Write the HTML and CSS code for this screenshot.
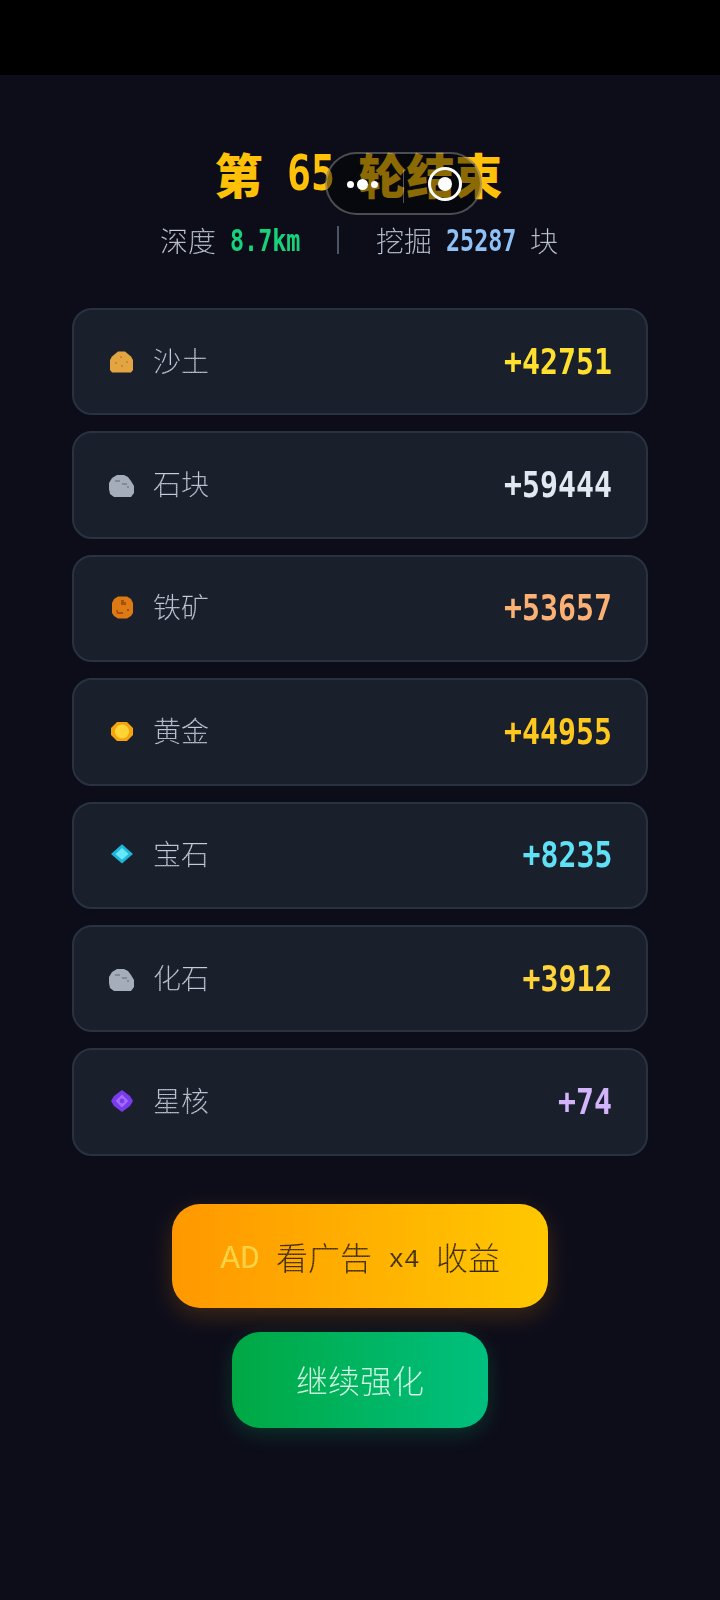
FILE: index.html
```html
<!DOCTYPE html>
<html lang="zh">
<head>
<meta charset="utf-8">
<title>第 65 轮结束</title>
<link rel="stylesheet" href="styles.css">
</head>
<body>
<div class="topbar"></div>
<main class="screen">
  <h1 class="title"><span>第</span><span class="num"><span class="num-in">65</span></span><span>轮结束</span></h1>
  <div class="stats">
    <div class="stat"><span class="dots">深度</span><b class="num-s green"><span class="num-in">8.7km</span></b></div>
    <i class="sep"></i>
    <div class="stat"><span class="dots">挖掘</span><b class="num-s blue"><span class="num-in">25287</span></b><span class="dots">块</span></div>
  </div>
  <section class="list">
    <div class="row"><div class="name">
      <svg class="ico" viewBox="0 0 13 13"><path fill="#e2a541" d="M4.5 1.25H8L9.5 2.500 11 3.800 12 5.500v5l-1 1.250H1.500l-1-1.250v-5l1-1.700L3 2.500z"/><path fill="#c98a2c" d="M5.500 3.500h1v1h-1zM3 6.500h1v1H3zM8.500 6h1v1h-1zM6 8h1v1H6z"/></svg>
      <span class="dots">沙土</span></div><div class="val sand">+42751</div></div>
    <div class="row"><div class="name">
      <svg class="ico stone-ico" viewBox="0 0 13 13"><path fill="#a5acba" d="M4 1h3.500L9.500 2l1.500 2 1.500 2.500V10L11 12H2.500L.5 10.500 0 8V5l1.500-2.500z"/><path fill="#828998" d="M3 3.500h2.500v1H3zM6.500 5H9v1H6.500zM9 6.500h1v1H9z"/></svg>
      <span class="dots">石块</span></div><div class="val stone">+59444</div></div>
    <div class="row"><div class="name">
      <svg class="ico" viewBox="0 0 13 13"><path fill="#dd7a14" d="M4.500.7h4.500l2 1.300 1 2v5l-1 1.500-2 1.200H4.500l-2-1.200-1-1.500V4l1-2z"/><path fill="#a8500e" d="M6 2.500h1.500v1h1v1.500H6zM3.500 7.500h1v1h2.500v1h-3zM9 7h1v1H9z"/></svg>
      <span class="dots">铁矿</span></div><div class="val iron">+53657</div></div>
    <div class="row"><div class="name">
      <svg class="ico" viewBox="0 0 13 13"><path fill="#f5a30f" d="M4 1.500h5l3 3v3.500l-3 3H4l-3-3V4.500z"/><circle fill="#fcd535" cx="6.500" cy="6.250" r="3.500"/></svg>
      <span class="dots">黄金</span></div><div class="val gold">+44955</div></div>
    <div class="row"><div class="name">
      <svg class="ico" viewBox="0 0 13 13"><path fill="#1fb6da" d="M6.500 1.100 12 6l-5.500 4.700L1 6z"/><path fill="#67e8f9" d="M6.500 3 9.800 6l-3.300 2.900L3.200 6z"/></svg>
      <span class="dots">宝石</span></div><div class="val gem">+8235</div></div>
    <div class="row"><div class="name">
      <svg class="ico stone-ico" viewBox="0 0 13 13"><path fill="#a5acba" d="M4 1h3.500L9.500 2l1.500 2 1.500 2.500V10L11 12H2.500L.5 10.500 0 8V5l1.500-2.500z"/><path fill="#828998" d="M3 3.500h2.500v1H3zM6.500 5H9v1H6.500zM9 6.500h1v1H9z"/></svg>
      <span class="dots">化石</span></div><div class="val fossil">+3912</div></div>
    <div class="row"><div class="name">
      <svg class="ico" viewBox="0 0 13 13"><path fill="#7c3aed" d="M6.500.5 8.500 2l2 1.500L12 6l-1.500 2.500-2 1.500-2 1.500-2-1.500-2-1.500L1 6l1.500-2.500 2-1.500z"/><path fill="#a06bff" d="M6.500 2.700 9.700 6 6.500 9.300 3.300 6z"/><circle fill="#7c3aed" cx="6.500" cy="6" r="1.200"/></svg>
      <span class="dots">星核</span></div><div class="val core">+74</div></div>
  </section>
  <div class="actions">
    <button class="btn btn-ad"><span class="ad dots-l">AD</span><span class="dots-d">看广告</span><span class="x4 dots-d">x4</span><span class="dots-d">收益</span></button>
    <button class="btn btn-go"><span class="dots-w">继续强化</span></button>
  </div>
</main>
<div class="pill" aria-hidden="true">
  <div class="more"><i></i><i class="big"></i><i></i></div>
  <i class="pill-sep"></i>
  <div class="target"><i></i></div>
</div>
</body>
</html>
```
FILE: styles.css
```css
* { box-sizing: border-box; }
html, body { margin: 0; padding: 0; }
body {
  width: 720px; height: 1600px; overflow: hidden; position: relative;
  background: #0d0d1a;
  font-family: "Noto Sans CJK SC", "DejaVu Sans Mono", sans-serif;
}
.topbar { height: 75px; background: #000; }
.screen { padding: 67px 72px 0; display: flex; flex-direction: column; align-items: center; }
.title {
  margin: 0 3px 0 0; height: 62px; line-height: 62px; font-size: 48px; font-weight: 900;
  color: #ffc107; display: flex; gap: 24px;
}
.num { display: block; width: 48px; }
.num .num-in {
  display: block; font-family: "DejaVu Sans Mono", monospace; font-size: 50px; font-weight: 700;
  transform: scaleX(.8); transform-origin: left center; white-space: nowrap;
}
.stats { display: flex; align-items: center; height: 44px; margin: 14px 2px 0 0; font-size: 28px; }
.stat { display: flex; gap: 14px; align-items: center; }
.num-s { display: block; width: 70px; }
.num-s .num-in {
  display: block; font-family: "DejaVu Sans Mono", monospace; font-size: 30px; font-weight: 700;
  transform: scaleX(.78); transform-origin: left center; white-space: nowrap;
}
.green { color: #16d27a; }
.blue { color: #8ec2f7; }
.sep { width: 2px; height: 28px; background: #4a5568; margin: 0 37px; }
.dots, .dots-d, .dots-l, .dots-w {
  color: transparent; -webkit-background-clip: text; background-clip: text; font-weight: 300;
}
.dots {
  background-image: radial-gradient(circle at center, #c6cedb 1px, rgba(198,206,219,.25) 1.3px);
  background-size: 2.33px 2.33px;
}
.dots-d {
  background-image: radial-gradient(circle at center, #33250a 1.15px, rgba(51,37,10,.1) 1.5px);
  background-size: 2.67px 2.67px;
}
.dots-l {
  background-image: radial-gradient(circle at center, #ffd84a 1.15px, rgba(255,216,74,.25) 1.5px);
  background-size: 2.67px 2.67px;
}
.dots-w {
  background-image: radial-gradient(circle at center, #e6fff0 1.15px, rgba(230,255,240,.25) 1.5px);
  background-size: 2.67px 2.67px;
}
.list { width: 576px; display: flex; flex-direction: column; gap: 16px; margin-top: 46px; }
.row {
  height: 107.4px; display: flex; align-items: center; justify-content: space-between;
  background: #19202c; border: 2px solid #283241; border-radius: 20px;
  padding: 0 34px 0 35px;
}
.name { display: flex; align-items: center; gap: 18px; font-size: 28px; }
.name .dots { margin-bottom: 4px; }
.ico { width: 26px; height: 26px; display: block; }
.stone-ico { margin-top: 2px; }
.val {
  font-family: "DejaVu Sans Mono", monospace; font-size: 36px; font-weight: 700;
  line-height: 44px; transform: scaleX(.83); transform-origin: right center; white-space: nowrap;
}
.sand { color: #ffe02e; }
.stone { color: #e2e8f0; }
.iron { color: #fbb074; }
.gold { color: #ffc81f; }
.gem { color: #5fe0f5; }
.fossil { color: #ffd43b; }
.core { color: #d3b4fa; }
.actions { display: flex; flex-direction: column; align-items: center; gap: 24px; margin-top: 48px; }
.btn {
  display: flex; align-items: center; justify-content: center; gap: 16px;
  border: 0; border-radius: 28px; font-family: inherit; font-size: 32px; padding: 0;
}
.btn-ad {
  width: 376px; height: 104px;
  background: linear-gradient(90deg, #ff9800, #ffc800);
  box-shadow: 0 8px 24px rgba(255, 152, 0, .2);
}
.ad { width: 40px; font-family: "Liberation Mono", monospace; font-size: 33px; line-height: 40px; margin-top: 8px; }
.x4 { width: 32px; font-family: "Liberation Mono", monospace; font-size: 26px; line-height: 40px; text-align: center; margin-top: 8px; }
.btn-go {
  width: 256px; height: 96px;
  background: linear-gradient(90deg, #00a843, #00c07f);
  box-shadow: 0 6px 20px rgba(0, 200, 110, .2);
}
.btn-go span { margin-bottom: 2px; }
.pill {
  position: absolute; left: 325px; top: 152px; width: 157px; height: 63px;
  border: 2px solid rgba(255,255,255,.28); border-radius: 32px; background: rgba(0,0,0,.45);
}
.more { position: absolute; left: 20px; top: 22px; display: flex; align-items: center; gap: 3px; height: 16px; }
.more i { width: 7px; height: 7px; background: #fff; border-radius: 50%; }
.more i.big { width: 11px; height: 11px; }
.pill-sep { position: absolute; left: 76px; top: 16px; width: 1px; height: 33px; background: rgba(255,255,255,.3); }
.target {
  position: absolute; left: 101px; top: 13px; width: 34px; height: 34px;
  border: 3px solid #fff; border-radius: 50%; display: flex; align-items: center; justify-content: center;
}
.target i { width: 14px; height: 14px; background: #fff; border-radius: 50%; }
```
